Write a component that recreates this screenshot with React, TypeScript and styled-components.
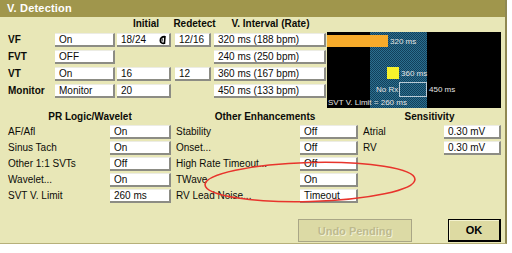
import React from "react";
import styled, { createGlobalStyle } from "styled-components";

const GlobalStyle = createGlobalStyle`
	html, body {
		margin: 0;
		padding: 0;
		background: #ffffff;
	}
	body {
		font-family: "Liberation Sans", Arial, sans-serif;
		color: #0c0c08;
	}
`;

const Page = styled.div`
	position: relative;
	width: 512px;
	height: 253px;
	overflow: hidden;
	background: #ffffff;
`;

const Window = styled.div`
	box-sizing: border-box;
	width: 507px;
	height: 244px;
	display: flex;
	flex-direction: column;
	background: #e8e7b7;
	border-right: 2px solid #8f8852;
	border-bottom: 1px solid #b6b07a;
`;

const TitleBar = styled.div`
	height: 17px;
	line-height: 17px;
	padding-left: 7px;
	background: #a0964c;
	color: #ffffff;
	font-size: 11px;
	font-weight: bold;
	letter-spacing: 0.2px;
`;

const Body = styled.div`
	flex: 1;
	display: flex;
	flex-direction: column;
	padding: 1px 0 1px 8px;
`;

const TopSection = styled.div`
	display: flex;
	align-items: flex-start;
`;

const TopGrid = styled.div`
	display: grid;
	grid-template-columns: 47px 62px 58px 39px 113px;
	grid-template-rows: 12px repeat(4, 14px);
	row-gap: 3px;
	align-items: center;
`;

const ColHead = styled.div<{ $col: number }>`
	grid-column: ${p => p.$col};
	display: flex;
	justify-content: center;
	white-space: nowrap;
	font-size: 10px;
	font-weight: bold;
	line-height: 12px;
`;

const RowLabel = styled.div<{ $bold?: boolean }>`
	font-size: 10px;
	font-weight: ${p => (p.$bold ? "bold" : "normal")};
	line-height: 14px;
	white-space: nowrap;
`;

const Field = styled.div<{ $w: number }>`
	box-sizing: border-box;
	width: ${p => p.$w}px;
	height: 14px;
	display: flex;
	align-items: center;
	justify-content: space-between;
	padding: 0 2px 0 4px;
	background: #ffffff;
	border-top: 1px solid #ecece4;
	border-right: 2px solid #8c8c84;
	border-bottom: 2px solid #8c8c84;
	font-size: 10px;
	line-height: 12px;
	white-space: nowrap;
	overflow: hidden;
`;

const Blank = styled.div``;

const Chart = styled.svg`
	display: block;
	margin-top: 14px;
	width: 174px;
	height: 76px;
	background: #000000;
`;

const BottomSection = styled.div`
	display: flex;
	margin-top: 2px;
`;

const Group = styled.div<{ $label: number; $field: number; $pad: number }>`
	display: grid;
	grid-template-columns: ${p => p.$label}px ${p => p.$field}px;
	grid-auto-rows: 14px;
	grid-template-rows: 13px;
	row-gap: 2px;
	align-items: center;

	& > .label {
		padding-left: ${p => p.$pad}px;
	}
`;

const GroupHead = styled.div`
	grid-column: 1 / -1;
	display: flex;
	justify-content: center;
	font-size: 10px;
	font-weight: bold;
	line-height: 12px;
	white-space: nowrap;
`;

const Footer = styled.div`
	margin-top: auto;
	display: flex;
	justify-content: flex-end;
	gap: 36px;
	padding-right: 4px;
`;

const Button = styled.div<{ $disabled?: boolean; $w: number }>`
	box-sizing: border-box;
	width: ${p => p.$w}px;
	height: 23px;
	display: flex;
	align-items: center;
	justify-content: center;
	font-size: 11px;
	font-weight: bold;
	background: ${p => (p.$disabled ? "#dcdaa5" : "#dddaa2")};
	color: ${p => (p.$disabled ? "#bdba8e" : "#000000")};
	text-shadow: ${p => (p.$disabled ? "1px 1px 0 #f2f1d6" : "none")};
	border: 1px solid ${p => (p.$disabled ? "#a9a686" : "#000000")};
	border-right-width: ${p => (p.$disabled ? 1 : 2)}px;
	border-bottom-width: ${p => (p.$disabled ? 1 : 2)}px;
	box-shadow: ${p => (p.$disabled ? "none" : "inset 1px 1px 0 #f4f2cf")};
`;

const Annotation = styled.svg`
	position: absolute;
	left: 0;
	top: 0;
	width: 512px;
	height: 253px;
	pointer-events: none;
`;

function LockIcon() {
	return <svg width="8" height="10" viewBox="0 0 8 10">
		<path d="M6 1 L5.4 9 M5.8 1.6 C3 1.4 1.2 3.2 1.3 5.6 C1.4 7.6 3.2 8.6 5.5 8.3" stroke="#000" strokeWidth="1.6" fill="none"/>
		<path d="M3.2 3.4 L3 6.6" stroke="#000" strokeWidth="1"/>
	</svg>;
}

const topRows = [
	{ label: "VF", mode: "On", initial: "18/24", redetect: "12/16", interval: "320 ms (188 bpm)", icon: true },
	{ label: "FVT", mode: "OFF", initial: null, redetect: null, interval: "240 ms (250 bpm)" },
	{ label: "VT", mode: "On", initial: "16", redetect: "12", interval: "360 ms (167 bpm)" },
	{ label: "Monitor", mode: "Monitor", initial: "20", redetect: null, interval: "450 ms (133 bpm)" },
];

const prLogic = [
	["AF/Afl", "On"],
	["Sinus Tach", "On"],
	["Other 1:1 SVTs", "Off"],
	["Wavelet...", "On"],
	["SVT V. Limit", "260 ms"],
];

const enhancements = [
	["Stability", "Off"],
	["Onset...", "Off"],
	["High Rate Timeout...", "Off"],
	["TWave", "On"],
	["RV Lead Noise...", "Timeout"],
];

const sensitivity = [
	["Atrial", "0.30 mV"],
	["RV", "0.30 mV"],
];

function ZoneChart() {
	return <Chart viewBox="0 0 174 76">
		<defs>
			<pattern id="dither" width="2" height="2" patternUnits="userSpaceOnUse">
				<rect width="2" height="2" fill="#123f5a"/>
				<rect width="1" height="1" fill="#2b6f8f"/>
				<rect x="1" y="1" width="1" height="1" fill="#2b6f8f"/>
			</pattern>
		</defs>
		<rect x="43" y="0" width="57" height="76" fill="url(#dither)"/>
		<rect x="0" y="3" width="61" height="12" fill="#f6ab2b"/>
		<rect x="60" y="35" width="12" height="12" fill="#f7f22c"/>
		<rect x="72.5" y="50.5" width="27" height="14" fill="none" stroke="#b9cbd6" strokeWidth="1"/>
		<g fill="#e4e4e4" fontSize="8" fontFamily="Liberation Sans, Arial, sans-serif">
			<text x="63" y="12">320 ms</text>
			<text x="74" y="44">360 ms</text>
			<text x="49" y="60">No Rx</text>
			<text x="102" y="60">450 ms</text>
			<text x="1" y="73">SVT V. Limit = 260 ms</text>
		</g>
	</Chart>;
}

export default function App() {
	return <Page>
		<GlobalStyle/>
		<Window>
			<TitleBar>V. Detection</TitleBar>
			<Body>
				<TopSection>
					<TopGrid>
						<ColHead $col={3}>Initial</ColHead>
						<ColHead $col={4}>Redetect</ColHead>
						<ColHead $col={5}>V. Interval (Rate)</ColHead>
						{topRows.map(row => <React.Fragment key={row.label}>
							<RowLabel $bold>{row.label}</RowLabel>
							<Field $w={60}>{row.mode}</Field>
							{row.initial ? <Field $w={54}>
								<span>{row.initial}</span>
								{row.icon && <LockIcon/>}
							</Field> : <Blank/>}
							{row.redetect ? <Field $w={36}>{row.redetect}</Field> : <Blank/>}
							<Field $w={112}>{row.interval}</Field>
						</React.Fragment>)}
					</TopGrid>
					<ZoneChart/>
				</TopSection>
				<BottomSection>
					<Group $label={102} $field={62} $pad={0}>
						<GroupHead>PR Logic/Wavelet</GroupHead>
						{prLogic.map(([label, value]) => <React.Fragment key={label}>
							<RowLabel className="label">{label}</RowLabel>
							<Field $w={61}>{value}</Field>
						</React.Fragment>)}
					</Group>
					<Group $label={128} $field={58} $pad={4}>
						<GroupHead>Other Enhancements</GroupHead>
						{enhancements.map(([label, value]) => <React.Fragment key={label}>
							<RowLabel className="label">{label}</RowLabel>
							<Field $w={58}>{value}</Field>
						</React.Fragment>)}
					</Group>
					<Group $label={86} $field={57} $pad={5}>
						<GroupHead>Sensitivity</GroupHead>
						{sensitivity.map(([label, value]) => <React.Fragment key={label}>
							<RowLabel className="label">{label}</RowLabel>
							<Field $w={57}>{value}</Field>
						</React.Fragment>)}
					</Group>
				</BottomSection>
				<Footer>
					<Button $disabled $w={114}>Undo Pending</Button>
					<Button $w={53}>OK</Button>
				</Footer>
			</Body>
		</Window>
		<Annotation viewBox="0 0 512 253">
			<ellipse cx="310" cy="182" rx="105" ry="19.5" transform="rotate(-1.5 310 182)" fill="none" stroke="#e8342c" strokeWidth="1.6"/>
		</Annotation>
	</Page>;
}
